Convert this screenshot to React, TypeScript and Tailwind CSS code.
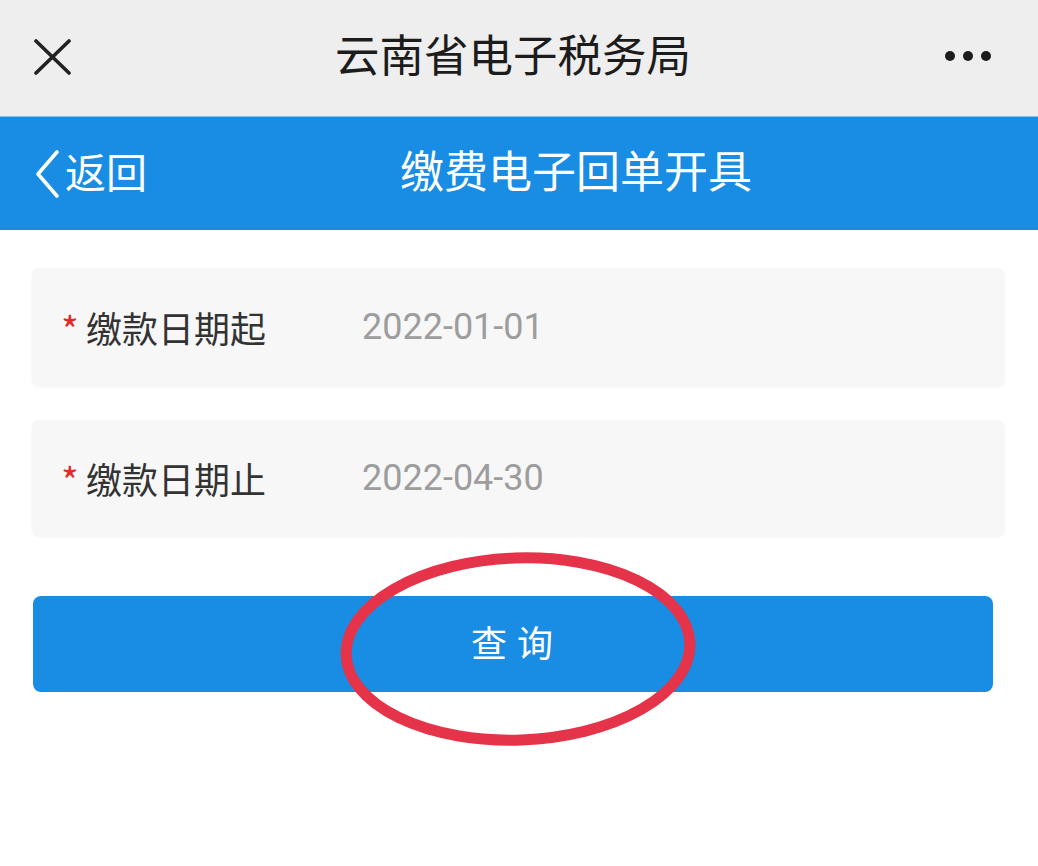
export default function App() {
  return (
    <div
      className="relative w-[1038px] h-[866px] bg-white overflow-hidden"
      style={{ fontFamily: '"Noto Sans CJK SC", "Noto Sans", sans-serif' }}
    >
      {/* top gray bar */}
      <div className="relative h-[116px] bg-[#efeeee] flex items-center justify-center">
        <svg className="absolute left-[34px] top-[39px]" width="37" height="36" viewBox="0 0 37 36">
          <path d="M2 2 L35 34 M35 2 L2 34" stroke="#222" strokeWidth="3.6" strokeLinecap="round" fill="none" />
        </svg>
        <div className="text-[44.5px] leading-none text-[#1c1c1c] mt-[-10px] mr-[12px]">云南省电子税务局</div>
        <div className="absolute right-[47px] top-[51px] flex gap-[8px]">
          <span className="w-[10px] h-[10px] rounded-full bg-[#1c1c1c]" />
          <span className="w-[10px] h-[10px] rounded-full bg-[#1c1c1c]" />
          <span className="w-[10px] h-[10px] rounded-full bg-[#1c1c1c]" />
        </div>
      </div>
      {/* blue bar */}
      <div className="relative h-[114px] bg-[#198ce3] flex items-center justify-center border-t border-[#7fc3f0]">
        <div className="absolute left-[34px] top-[32px] flex items-center">
          <svg width="26" height="50" viewBox="0 0 26 50">
            <path d="M23 3 L4 25 L23 47" stroke="#fff" strokeWidth="3.6" strokeLinecap="round" strokeLinejoin="round" fill="none" />
          </svg>
          <span className="ml-[5px] text-[41px] leading-none text-white mt-[-8px]">返回</span>
        </div>
        <div className="text-[44px] leading-none text-white ml-[114px] mt-[-10px]">缴费电子回单开具</div>
      </div>
      {/* content */}
      <div className="pl-[32px] pt-[38px] flex flex-col">
        <div className="w-[973px] h-[118px] bg-[#f7f7f8] rounded-[7px] shadow-[0_1px_3px_rgba(0,0,0,0.05)] flex items-center pl-[29px]">
          <span className="text-[#e12b2b] text-[38px] leading-none mt-[4px] w-[25px]">*</span>
          <span className="text-[36px] leading-none text-[#333] w-[276px]">缴款日期起</span>
          <span className="text-[36px] leading-none text-[#9d9d9d]" style={{ fontFamily: 'Roboto, "Noto Sans", sans-serif' }}>2022-01-01</span>
        </div>
        <div className="mt-[34px] w-[973px] h-[116px] bg-[#f7f7f8] rounded-[7px] shadow-[0_1px_3px_rgba(0,0,0,0.05)] flex items-center pl-[29px]">
          <span className="text-[#e12b2b] text-[38px] leading-none mt-[4px] w-[25px]">*</span>
          <span className="text-[36px] leading-none text-[#333] w-[276px]">缴款日期止</span>
          <span className="text-[36px] leading-none text-[#9d9d9d]" style={{ fontFamily: 'Roboto, "Noto Sans", sans-serif' }}>2022-04-30</span>
        </div>
        <div className="mt-[60px] ml-[1px] w-[960px] h-[96px] bg-[#198ce3] rounded-[8px] flex items-center justify-center">
          <span className="text-[36px] leading-none text-white tracking-[10px] ml-[8px] mt-[-6px]">查询</span>
        </div>
      </div>
      {/* red ellipse annotation */}
      <svg className="absolute left-[336px] top-[548px]" width="364" height="204" viewBox="0 0 364 204">
        <ellipse cx="182" cy="101" rx="172" ry="91" stroke="#e5334a" strokeWidth="11" fill="none" transform="rotate(-2 182 101)" />
      </svg>
    </div>
  );
}
